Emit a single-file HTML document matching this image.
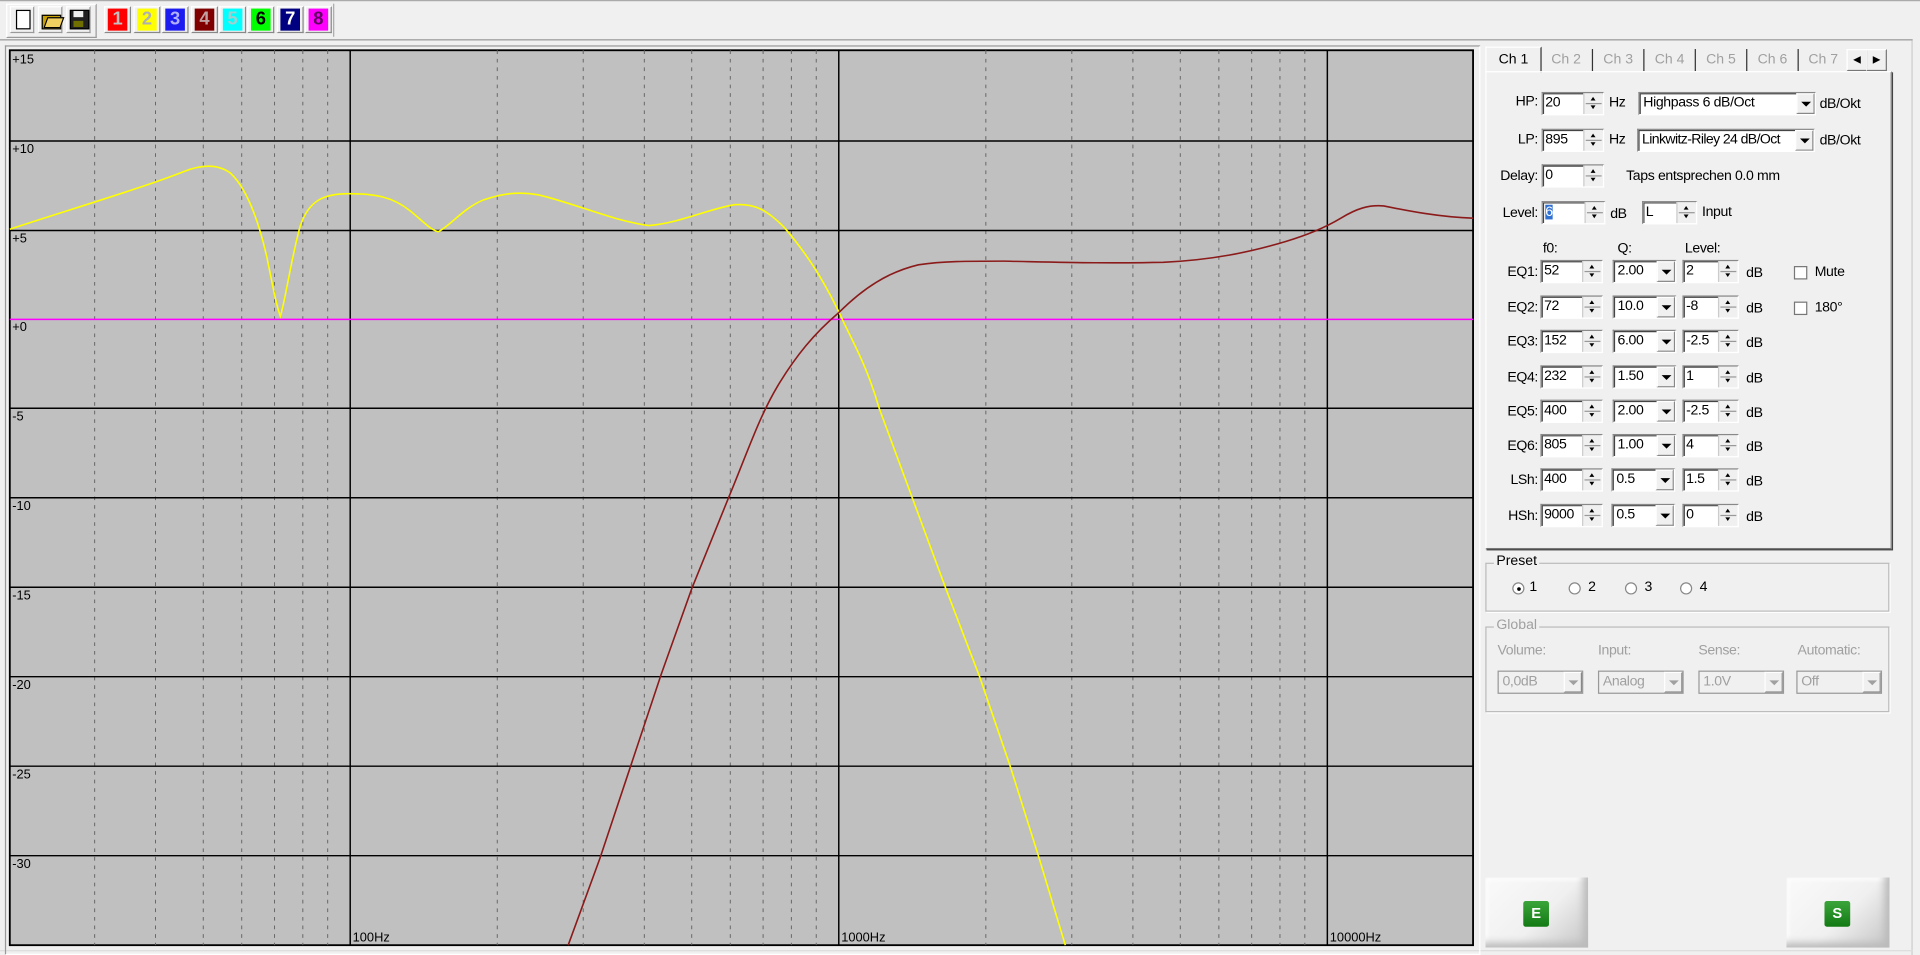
<!DOCTYPE html>
<html><head><meta charset="utf-8"><style>
html,body{margin:0;padding:0;background:#f0f0f0;width:1920px;height:955px;overflow:hidden}
#root{position:absolute;left:0;top:0;width:1568px;height:779px;transform-origin:0 0;transform:scale(1.22449,1.2259);font-family:"Liberation Sans",sans-serif;font-size:11px;color:#000}
.a{position:absolute}
.tb{position:absolute;top:5px;width:20px;height:22px;border:1px solid;border-color:#fff #999 #999 #fff;box-sizing:border-box}
.cb{position:absolute;top:7px;width:16px;height:18px;font:bold 15px "Liberation Sans",sans-serif;text-align:center;line-height:18px}
.cbw{position:absolute;top:5px;width:22px;height:22px;border:1px solid;border-color:#fff #888 #888 #fff;box-sizing:border-box}
.lbl{position:absolute;text-align:right;font-size:11.5px;letter-spacing:-0.3px}
.t{font-size:11.5px;letter-spacing:-0.3px}
.sp{position:absolute;height:19px;background:#fff;border:1px solid;border-color:#888 #fff #fff #888;box-shadow:inset 1px 1px 0 #444;box-sizing:border-box;font-size:11.5px;letter-spacing:-0.3px;line-height:17px;padding-left:2px}
.sp i{position:absolute;right:0;top:0;width:15px;height:17px;background:#f0f0f0;border-left:1px solid #ccc;font-style:normal}
.sp i:before{content:"";position:absolute;left:5px;top:3px;border:2.5px solid transparent;border-bottom:3px solid #000;border-top:0}
.sp i:after{content:"";position:absolute;left:5px;top:10px;border:2.5px solid transparent;border-top:3px solid #000;border-bottom:0}
.sp b{position:absolute;right:1px;top:8px;width:13px;height:1px;background:#999}
.cm{position:absolute;height:19px;background:#fff;border:1px solid;border-color:#888 #fff #fff #888;box-shadow:inset 1px 1px 0 #444;box-sizing:border-box;font-size:11.5px;letter-spacing:-0.3px;line-height:17px;padding-left:3px;overflow:hidden;white-space:nowrap}
.cm i{position:absolute;right:0;top:0;width:15px;height:17px;background:#f0f0f0;border:1px solid;border-color:#fff #888 #888 #fff;box-sizing:border-box}
.cm i:after{content:"";position:absolute;left:3px;top:6px;border:4px solid transparent;border-top:4px solid #000;border-bottom:0}
.dis{color:#a0a0a0}
.cm.dis{color:#a0a0a0;background:#f0f0f0;box-shadow:none}
.cm.dis i:after{border-top-color:#a0a0a0}
.tab{position:absolute;top:40px;height:18px;font-size:11.5px;line-height:18px;color:#a0a0a0;border-right:1px solid #333;box-sizing:border-box;text-align:center}
.grp{position:absolute;border:1px solid #bbb;box-shadow:1px 1px 0 #fff}
.gl{position:absolute;top:-8px;left:6px;background:#f0f0f0;padding:0 2px;font-size:11.5px}
.bigb{position:absolute;width:84px;height:57px;background:linear-gradient(135deg,#fafafa 0%,#f0f0f0 55%,#c4c4c4 100%);box-shadow:inset -4px -4px 6px #bbb,inset 2px 2px 3px #fff}
.gk{position:absolute;left:31px;top:19px;width:21px;height:21px;background:linear-gradient(#3ba53b,#137a13);border-radius:2px;color:#fff;font:bold 12px "Liberation Sans",sans-serif;text-align:center;line-height:21px}
.rd{position:absolute;top:475px;width:10px;height:10px;border-radius:50%;background:#fff;border:1px solid #888;box-sizing:border-box}
.ck{position:absolute;width:11px;height:11px;background:#fff;border:1px solid #777;box-sizing:border-box}
</style></head><body><div id="root">
<div class="a" style="left:0;top:0;width:1568px;height:1px;background:#aaa"></div>
<div class="a" style="left:0;top:32px;width:1562px;height:1px;background:#999"></div>
<div class="a" style="left:1561px;top:33px;width:1px;height:746px;background:#ccc"></div>
<div class="a" style="left:0;top:775px;width:1562px;height:1px;background:#ddd"></div>
<div class="a" style="left:5px;top:3px;width:72px;height:26px;border:1px solid;border-color:#fff #999 #999 #fff"></div>
<div class="tb" style="left:8px"><div class="a" style="left:4px;top:2px;width:10px;height:14px;background:#fff;border:1px solid #000"></div></div>
<div class="tb" style="left:31px"><div class="a" style="left:2px;top:6px;width:14px;height:10px;background:#c8a000;border:1px solid #000"></div><div class="a" style="left:5px;top:8px;width:12px;height:7px;background:#f0d060;border:1px solid #000;transform:skewX(-20deg)"></div></div>
<div class="tb" style="left:54px"><div class="a" style="left:2px;top:2px;width:14px;height:14px;background:#202020;border:1px solid #000"></div><div class="a" style="left:5px;top:3px;width:8px;height:5px;background:#eee"></div><div class="a" style="left:5px;top:11px;width:8px;height:5px;background:#707000"></div></div>
<div class="a" style="left:82px;top:3px;width:190px;height:27px;border-right:1px solid #aaa"></div>
<div class="cbw" style="left:85px"></div><div class="cb" style="left:88px;background:#f00;color:#c0c0c0">1</div>
<div class="cbw" style="left:109px"></div><div class="cb" style="left:112px;background:#ff0;color:#b0b0b0">2</div>
<div class="cbw" style="left:132px"></div><div class="cb" style="left:135px;background:#1c1cf0;color:#b0b0ff">3</div>
<div class="cbw" style="left:156px"></div><div class="cb" style="left:159px;background:#800000;color:#c0a0a0">4</div>
<div class="cbw" style="left:179px"></div><div class="cb" style="left:182px;background:#0ff;color:#a0d0d0">5</div>
<div class="cbw" style="left:202px"></div><div class="cb" style="left:205px;background:#0f0;color:#000">6</div>
<div class="cbw" style="left:226px"></div><div class="cb" style="left:229px;background:#000080;color:#fff">7</div>
<div class="cbw" style="left:249px"></div><div class="cb" style="left:252px;background:#f0f;color:#600060">8</div>
<div class="a" style="left:4px;top:37px;width:1203px;height:740px;border:1px solid #999;border-right-color:#fff;border-bottom-color:#fff"></div>
<svg class="a" style="left:0;top:0" width="1210" height="779" viewBox="0 0 1210 779">
<rect x="8" y="41" width="1195" height="730" fill="#c0c0c0" stroke="#000" stroke-width="1.5"/>
<g stroke="#666" stroke-width="0.8" stroke-dasharray="3,4">
<path d="M77.3 41V771M127 41V771M166 41V771M197.4 41V771M224.2 41V771M247.3 41V771M267.6 41V771M406.1 41V771M476.3 41V771M526.2 41V771M564.9 41V771M596.4 41V771M623.2 41V771M646.3 41V771M666.6 41V771M805.1 41V771M875.3 41V771M925.2 41V771M963.9 41V771M995.4 41V771M1022.2 41V771M1045.3 41V771M1065.6 41V771"/>
</g>
<g stroke="#000" stroke-width="1.2">
<path d="M286 41V771M685 41V771M1084 41V771M8 115H1203M8 188H1203M8 333H1203M8 406H1203M8 479H1203M8 552H1203M8 625H1203M8 698H1203"/>
</g>
<path d="M8 260.5H1203" stroke="#ff00ff" stroke-width="1.2"/>
<g font-family="Liberation Sans,sans-serif" font-size="10.5" fill="#000">
<text x="10" y="52">+15</text><text x="10" y="125">+10</text><text x="10" y="198">+5</text><text x="10" y="270">+0</text><text x="10" y="343">-5</text><text x="10" y="416">-10</text><text x="10" y="489">-15</text><text x="10" y="562">-20</text><text x="10" y="635">-25</text><text x="10" y="708">-30</text>
<text x="288" y="768">100Hz</text><text x="687" y="768">1000Hz</text><text x="1086" y="768">10000Hz</text>
</g>
<path fill="none" stroke="#ffff00" stroke-width="1.3" d="M8 187 C60 170 120 152 150 140 C165 134 178 134 188 141 C200 152 210 175 218 210 C223 235 226 250 229 258 C233 245 238 210 245 185 C252 163 265 158 285 158 C305 158 320 160 335 172 C345 180 352 188 358 189 C368 184 378 170 395 163 C410 158 422 156 440 159 C470 166 500 180 530 184 C555 182 580 170 600 167 C615 166 625 170 640 185 C660 208 675 232 690 265 C700 285 710 305 718 333 L745 406 L772 479 L800 552 L825 625 L848 698 L870 771"/>
<path fill="none" stroke="#8b1a1a" stroke-width="1.3" d="M464 771 L490 700 L515 625 L540 550 L565 480 L595 406 C610 370 620 340 635 315 C650 290 665 272 685 255 C705 235 725 222 750 216 C770 213 790 213 820 213 C870 214 900 215 950 214 C990 212 1020 206 1050 197 C1070 191 1085 184 1095 178 C1108 170 1118 167 1130 168 C1150 172 1175 177 1203 178"/>
</svg>
<div class="a" style="left:1213px;top:38px;width:44px;height:20px;background:#f0f0f0;border:1px solid #fff;border-bottom:none;border-right:1px solid #333;font-size:11.5px;line-height:20px;text-align:center">Ch 1</div>
<div class="tab" style="left:1258px;width:43px">Ch 2</div>
<div class="tab" style="left:1301px;width:42px">Ch 3</div>
<div class="tab" style="left:1343px;width:42px">Ch 4</div>
<div class="tab" style="left:1385px;width:42px">Ch 5</div>
<div class="tab" style="left:1427px;width:42px">Ch 6</div>
<div class="tab" style="left:1469px;width:40px;border:none">Ch 7</div>
<div class="a" style="left:1508px;top:40px;width:15px;height:16px;border:1px solid;border-color:#fff #777 #777 #fff;font-size:8px;line-height:16px;text-align:center">◀</div>
<div class="a" style="left:1524px;top:40px;width:15px;height:16px;border:1px solid;border-color:#fff #777 #777 #fff;font-size:8px;line-height:16px;text-align:center">▶</div>
<div class="a" style="left:1213px;top:58px;width:330px;height:388px;border:1px solid;border-color:#fff #777 #777 #fff;box-shadow:1px 1px 0 #444"></div>
<div class="lbl" style="left:1215px;width:41px;top:77px">HP:</div>
<div class="sp" style="left:1259px;top:75px;width:51px">20<i></i><b></b></div>
<div class="a t" style="left:1314px;top:78px">Hz</div>
<div class="cm" style="left:1338px;top:75px;width:145px">Highpass 6 dB/Oct<i></i></div>
<div class="a t" style="left:1486px;top:79px">dB/Okt</div>
<div class="lbl" style="left:1215px;width:41px;top:108px">LP:</div>
<div class="sp" style="left:1259px;top:105px;width:51px">895<i></i><b></b></div>
<div class="a t" style="left:1314px;top:108px">Hz</div>
<div class="cm" style="left:1337px;top:105px;width:145px;letter-spacing:-0.5px">Linkwitz-Riley 24 dB/Oct<i></i></div>
<div class="a t" style="left:1486px;top:109px">dB/Okt</div>
<div class="lbl" style="left:1215px;width:41px;top:138px">Delay:</div>
<div class="sp" style="left:1259px;top:134px;width:51px">0<i></i><b></b></div>
<div class="a t" style="left:1328px;top:138px">Taps entsprechen 0.0 mm</div>
<div class="lbl" style="left:1215px;width:41px;top:168px">Level:</div>
<div class="sp" style="left:1259px;top:164px;width:52px"><span style="background:#3070d0;color:#fff">6</span><i></i><b></b></div>
<div class="a t" style="left:1315px;top:169px">dB</div>
<div class="sp" style="left:1341px;top:164px;width:45px">L<i></i><b></b></div>
<div class="a t" style="left:1390px;top:167px">Input</div>
<div class="a t" style="left:1260px;top:197px">f0:</div>
<div class="a t" style="left:1321px;top:197px">Q:</div>
<div class="a t" style="left:1376px;top:197px">Level:</div>
<div class="ck" style="left:1465px;top:217px"></div><div class="a t" style="left:1482px;top:216px">Mute</div>
<div class="ck" style="left:1465px;top:246px"></div><div class="a t" style="left:1482px;top:245px">180°</div>
<div class="lbl" style="left:1215px;width:41px;top:216px">EQ1:</div><div class="sp" style="left:1258px;top:212px;width:51px">52<i></i><b></b></div><div class="cm" style="left:1317px;top:212px;width:52px">2.00<i></i></div><div class="sp" style="left:1374px;top:212px;width:46px">2<i></i><b></b></div><div class="a t" style="left:1426px;top:217px">dB</div>
<div class="lbl" style="left:1215px;width:41px;top:245px">EQ2:</div><div class="sp" style="left:1258px;top:241px;width:51px">72<i></i><b></b></div><div class="cm" style="left:1317px;top:241px;width:52px">10.0<i></i></div><div class="sp" style="left:1374px;top:241px;width:46px">-8<i></i><b></b></div><div class="a t" style="left:1426px;top:246px">dB</div>
<div class="lbl" style="left:1215px;width:41px;top:273px">EQ3:</div><div class="sp" style="left:1258px;top:269px;width:51px">152<i></i><b></b></div><div class="cm" style="left:1317px;top:269px;width:52px">6.00<i></i></div><div class="sp" style="left:1374px;top:269px;width:46px">-2.5<i></i><b></b></div><div class="a t" style="left:1426px;top:274px">dB</div>
<div class="lbl" style="left:1215px;width:41px;top:302px">EQ4:</div><div class="sp" style="left:1258px;top:298px;width:51px">232<i></i><b></b></div><div class="cm" style="left:1317px;top:298px;width:52px">1.50<i></i></div><div class="sp" style="left:1374px;top:298px;width:46px">1<i></i><b></b></div><div class="a t" style="left:1426px;top:303px">dB</div>
<div class="lbl" style="left:1215px;width:41px;top:330px">EQ5:</div><div class="sp" style="left:1258px;top:326px;width:51px">400<i></i><b></b></div><div class="cm" style="left:1317px;top:326px;width:52px">2.00<i></i></div><div class="sp" style="left:1374px;top:326px;width:46px">-2.5<i></i><b></b></div><div class="a t" style="left:1426px;top:331px">dB</div>
<div class="lbl" style="left:1215px;width:41px;top:358px">EQ6:</div><div class="sp" style="left:1258px;top:354px;width:51px">805<i></i><b></b></div><div class="cm" style="left:1317px;top:354px;width:52px">1.00<i></i></div><div class="sp" style="left:1374px;top:354px;width:46px">4<i></i><b></b></div><div class="a t" style="left:1426px;top:359px">dB</div>
<div class="lbl" style="left:1215px;width:41px;top:386px">LSh:</div><div class="sp" style="left:1258px;top:382px;width:51px">400<i></i><b></b></div><div class="cm" style="left:1316px;top:382px;width:52px">0.5<i></i></div><div class="sp" style="left:1374px;top:382px;width:46px">1.5<i></i><b></b></div><div class="a t" style="left:1426px;top:387px">dB</div>
<div class="lbl" style="left:1215px;width:41px;top:415px">HSh:</div><div class="sp" style="left:1258px;top:411px;width:51px">9000<i></i><b></b></div><div class="cm" style="left:1316px;top:411px;width:52px">0.5<i></i></div><div class="sp" style="left:1374px;top:411px;width:46px">0<i></i><b></b></div><div class="a t" style="left:1426px;top:416px">dB</div>
<div class="grp" style="left:1213px;top:459px;width:328px;height:38px"><div class="gl">Preset</div></div>
<div class="rd" style="left:1235px"><div class="a" style="left:3px;top:3px;width:3px;height:3px;background:#000;border-radius:50%"></div></div><div class="a t" style="left:1249px;top:473px">1</div>
<div class="rd" style="left:1281px"></div><div class="a t" style="left:1297px;top:473px">2</div>
<div class="rd" style="left:1327px"></div><div class="a t" style="left:1343px;top:473px">3</div>
<div class="rd" style="left:1372px"></div><div class="a t" style="left:1388px;top:473px">4</div>
<div class="grp dis" style="left:1213px;top:511px;width:328px;height:68px"><div class="gl">Global</div></div>
<div class="a dis t" style="left:1223px;top:525px">Volume:</div>
<div class="a dis t" style="left:1305px;top:525px">Input:</div>
<div class="a dis t" style="left:1387px;top:525px">Sense:</div>
<div class="a dis t" style="left:1468px;top:525px">Automatic:</div>
<div class="cm dis" style="left:1223px;top:547px;width:70px;border:1px solid #999">0,0dB<i></i></div>
<div class="cm dis" style="left:1305px;top:547px;width:70px;border:1px solid #999">Analog<i></i></div>
<div class="cm dis" style="left:1387px;top:547px;width:70px;border:1px solid #999">1.0V<i></i></div>
<div class="cm dis" style="left:1467px;top:547px;width:70px;border:1px solid #999">Off<i></i></div>
<div class="bigb" style="left:1213px;top:716px"><div class="gk">E</div></div>
<div class="bigb" style="left:1459px;top:716px"><div class="gk">S</div></div>
</div></body></html>
